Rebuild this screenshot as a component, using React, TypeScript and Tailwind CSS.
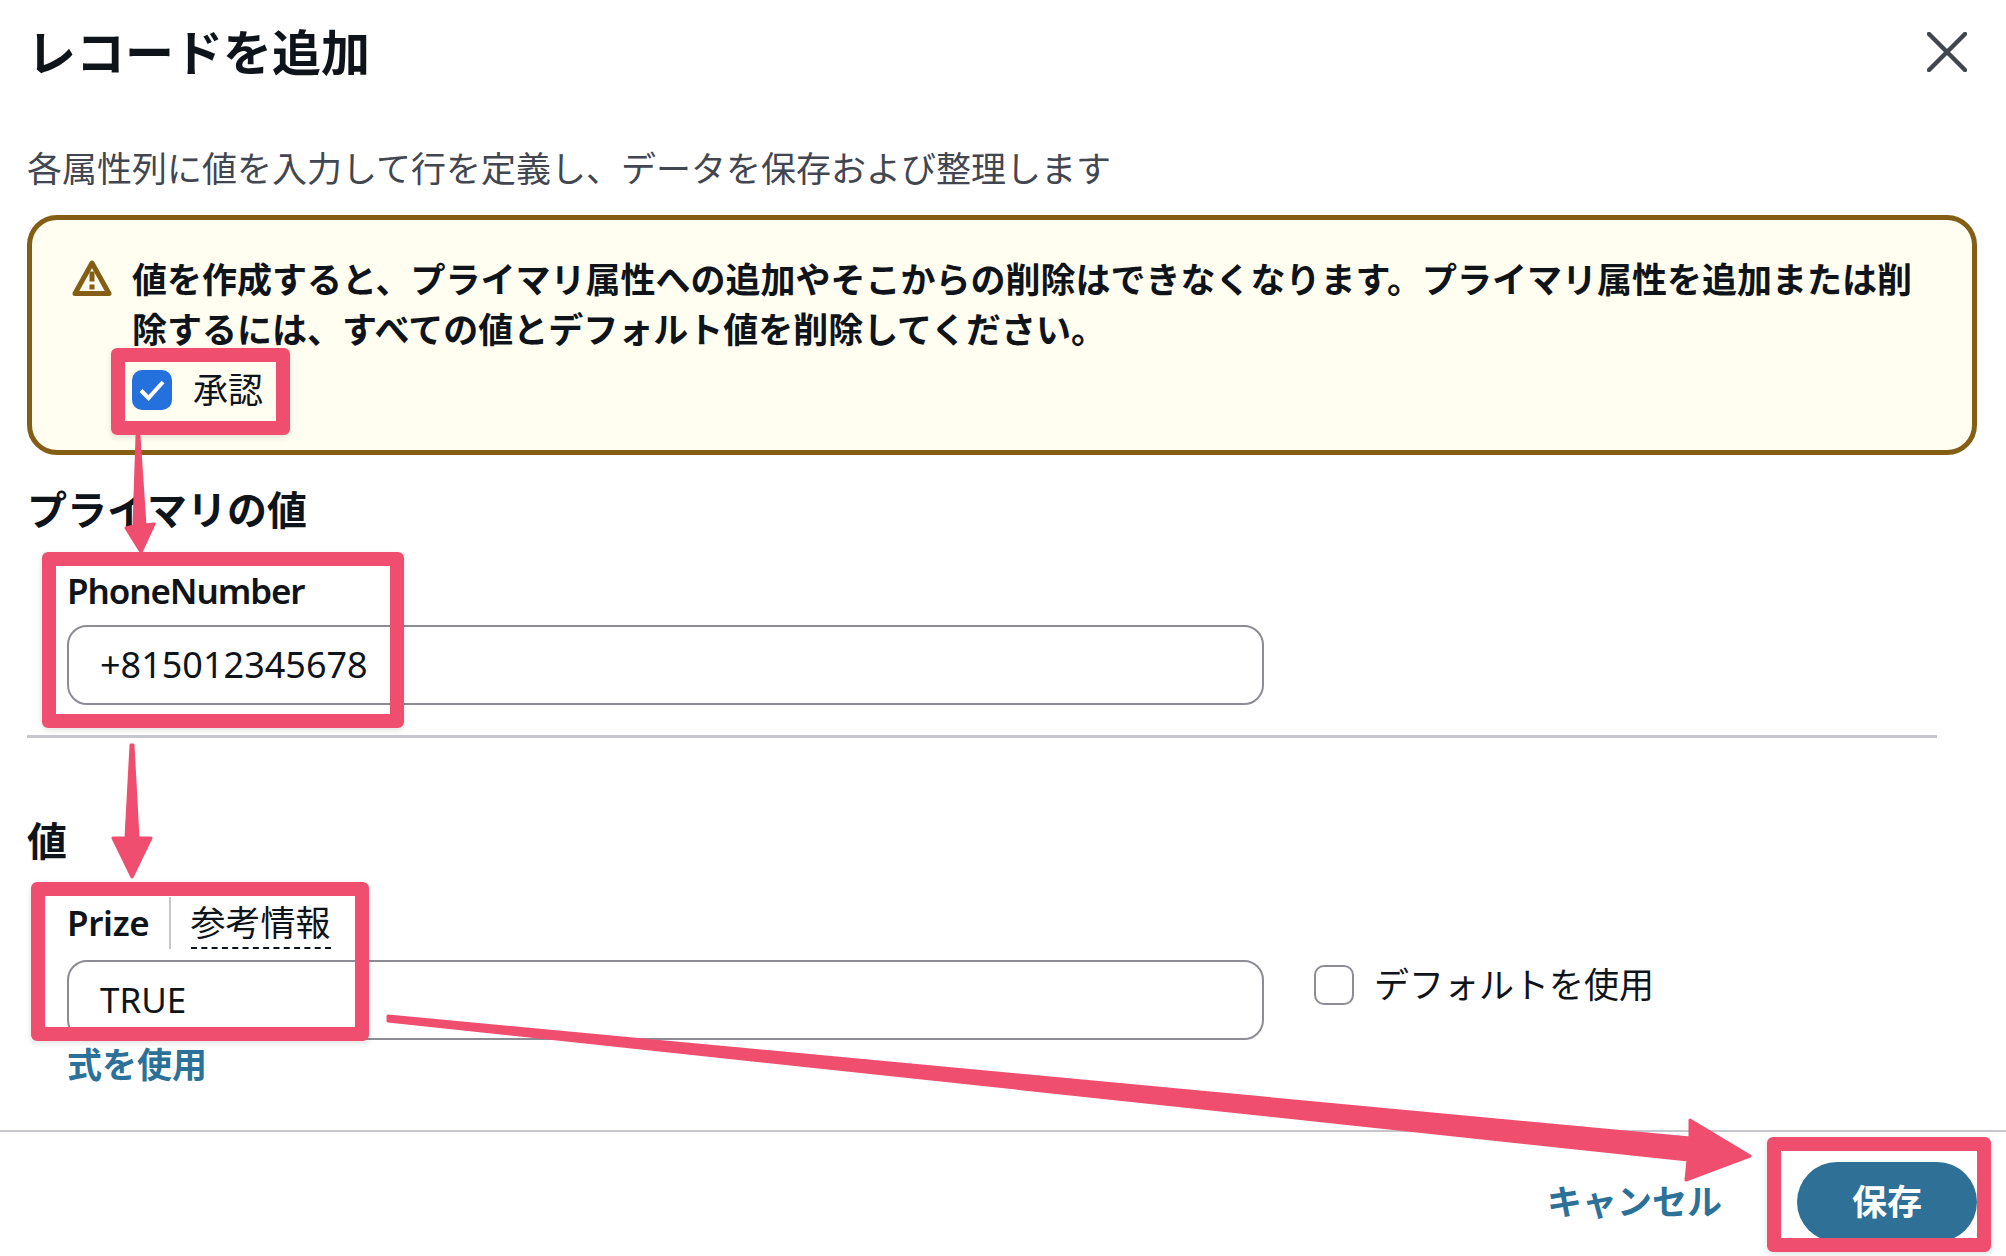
const pink = "#f04e6f";

function Callout({ className }: { className: string }) {
  return (
    <div
      className={`absolute rounded-[6px] border-[14px] border-[#f04e6f] shadow-[0_2px_6px_rgba(0,0,0,0.12)] ${className}`}
    />
  );
}

function Arrows() {
  return (
    <svg className="pointer-events-none absolute left-0 top-0" width="2006" height="1256" viewBox="0 0 2006 1256">
      <g fill={pink} stroke={pink} strokeWidth="3" strokeLinejoin="round">
        <polygon points="137,436 139,436 145,525 154,524 141,552 126,528 134,526" />
        <polygon points="131,745 133,745 138,838 151,838 132,877 113,838 126,838" />
        <polygon points="388,1016 1690,1138 1690,1120 1750,1156 1686,1180 1688,1160 388,1021" />
      </g>
    </svg>
  );
}

export default function App() {
  return (
    <div
      className="relative h-[1256px] w-[2006px] overflow-hidden bg-white text-[35px] leading-[50px] text-[#0f141a]"
      style={{ fontFamily: '"Noto Sans", "Noto Sans CJK JP", sans-serif' }}
    >
      <div className="flex items-start justify-between pl-[27px] pr-[39px] pt-[22px]">
        <h1 className="text-[49px] font-bold leading-[60px]">レコードを追加</h1>
        <svg className="mt-[10px]" width="40" height="40" viewBox="0 0 40 40" fill="none" stroke="#414750" strokeWidth="4.5" strokeLinecap="round">
          <path d="M2 2 38 38M38 2 2 38" />
        </svg>
      </div>

      <p className="mt-[62px] pl-[27px] text-[#424650]">
        各属性列に値を入力して行を定義し、データを保存および整理します
      </p>

      <div className="ml-[27px] mt-[21px] flex h-[240px] w-[1950px] gap-[20px] rounded-[30px] border-[5px] border-[#855e16] bg-[#fffef0] pl-[40px] pt-[35px]">
        <svg className="mt-[5px] shrink-0" width="40" height="38" viewBox="0 0 40 38" fill="none">
          <path d="M20 3 37 33.5H3Z" stroke="#855e16" strokeWidth="5" strokeLinejoin="round" />
          <path d="M17.5 11.5h5v10h-5zM17.5 24.5h5v5h-5z" fill="#855e16" />
        </svg>
        <div className="w-[1800px]">
          <p className="font-bold">
            値を作成すると、プライマリ属性への追加やそこからの削除はできなくなります。プライマリ属性を追加または削除するには、すべての値とデフォルト値を削除してください。
          </p>
          <label className="mt-[10px] flex items-center gap-[21px]">
            <span className="flex h-[40px] w-[40px] items-center justify-center rounded-[10px] bg-[#2470dc]">
              <svg width="26" height="22" viewBox="0 0 26 22" fill="none" stroke="#fff" strokeWidth="4">
                <path d="M2 11.5 9.5 19 24 3" />
              </svg>
            </span>
            承認
          </label>
        </div>
      </div>

      <h2 className="ml-[27px] mt-[30px] text-[40px] font-bold">プライマリの値</h2>
      <div className="ml-[67px] mt-[31px] font-semibold tracking-[-1.1px]">PhoneNumber</div>
      <div className="ml-[67px] mt-[9px] flex h-[80px] w-[1197px] items-center rounded-[20px] border-[2.5px] border-[#8c8c94] pl-[31px] text-[36px]">
        +815012345678
      </div>

      <div className="ml-[27px] mt-[30px] h-[2.5px] w-[1910px] bg-[#c6c6cd]" />

      <h2 className="ml-[27px] mt-[78px] text-[40px] font-bold">値</h2>
      <div className="ml-[67px] mt-[32px] flex h-[51px] items-stretch">
        <span className="pr-[19px] font-semibold tracking-[-0.3px]">Prize</span>
        <span className="-mt-px w-[2px] bg-[#c6c6cd]" />
        <span className="ml-[20px] border-b-[2.5px] border-dashed border-[#0f141a]">参考情報</span>
      </div>
      <div className="ml-[67px] mt-[11px] flex items-start gap-[50px]">
        <div className="flex h-[80px] w-[1197px] items-center rounded-[20px] border-[2.5px] border-[#8c8c94] pl-[31px]">
          TRUE
        </div>
        <label className="flex items-start gap-[20px]">
          <span className="mt-[5px] h-[40px] w-[40px] rounded-[10px] border-[2.5px] border-[#8c8c94] bg-white" />
          デフォルトを使用
        </label>
      </div>
      <div className="ml-[67px] font-bold text-[#2c7197]">式を使用</div>

      <div className="mt-[40px] h-[2.5px] w-full bg-[#c6c6cd]" />

      <div className="mt-[30px] flex items-center justify-end pr-[29px]">
        <span className="font-bold text-[#2c7197]">キャンセル</span>
        <button className="ml-[75px] h-[80px] w-[180px] rounded-[40px] bg-[#2e7096] font-bold text-white">保存</button>
      </div>

      <Callout className="left-[111px] top-[348px] h-[87px] w-[179px]" />
      <Callout className="left-[42px] top-[552px] h-[176px] w-[362px]" />
      <Callout className="left-[31px] top-[882px] h-[159px] w-[338px]" />
      <Callout className="left-[1767px] top-[1137px] h-[115px] w-[224px]" />
      <Arrows />
    </div>
  );
}
